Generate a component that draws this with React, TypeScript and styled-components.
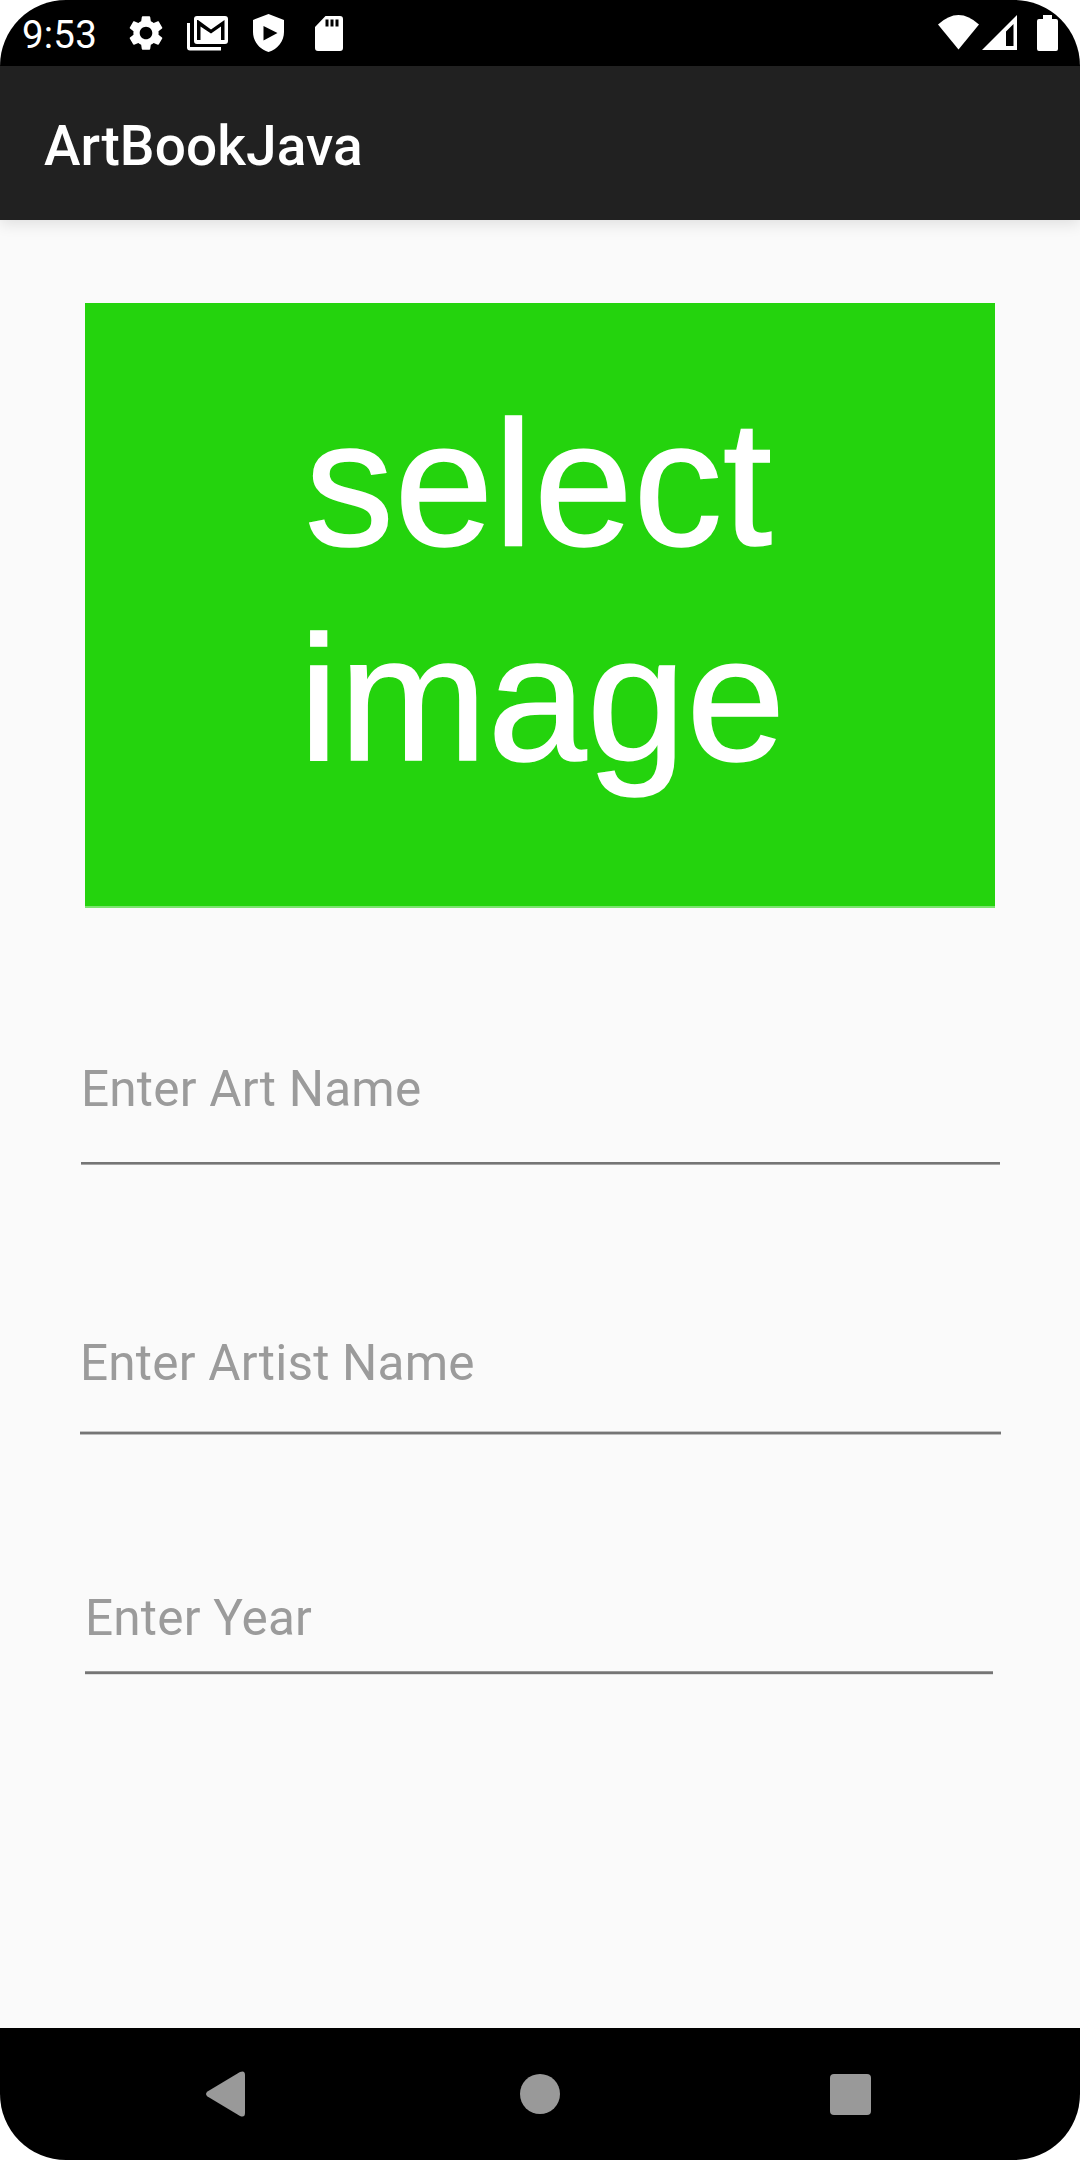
import React from "react";
import styled, { createGlobalStyle } from "styled-components";

const Global = createGlobalStyle`
  * { box-sizing: border-box; }
  body { margin: 0; background: #fff; }
`;

const Screen = styled.div`
  display: flex;
  flex-direction: column;
  width: 1080px;
  height: 2160px;
  overflow: hidden;
  border-radius: 66px;
  background: #fafafa;
  font-family: Roboto, "Liberation Sans", sans-serif;
`;

const StatusBar = styled.header`
  display: flex;
  flex: none;
  justify-content: space-between;
  height: 66px;
  padding: 0 22px;
  background: #000;
  color: #fff;
`;

const StatusGroup = styled.div`
  display: flex;
  align-items: flex-start;
`;

const Clock = styled.time`
  width: 103px;
  padding-top: 12px;
  font-size: 38.5px;
  letter-spacing: 0.2px;
  line-height: 45px;
`;

const Glyph = styled.svg<{ $top?: number; $left?: number }>`
  display: block;
  flex: none;
  margin: ${(p) => p.$top ?? 0}px 0 0 ${(p) => p.$left ?? 0}px;
  fill: currentColor;
`;

const AppBar = styled.div`
  display: flex;
  flex: none;
  align-items: center;
  height: 154px;
  padding: 6px 44px 0;
  background: #212121;
  box-shadow: 0 4px 14px rgba(0, 0, 0, 0.11);
`;

const Title = styled.h1`
  margin: 0;
  color: #fff;
  font-size: 55px;
  font-weight: 500;
  letter-spacing: 0.1px;
  line-height: 64px;
`;

const Form = styled.main`
  display: flex;
  flex: 1;
  flex-direction: column;
  padding-top: 83px;
`;

const ImagePicker = styled.button`
  display: flex;
  flex: none;
  flex-direction: column;
  align-items: flex-start;
  justify-content: flex-start;
  width: 910px;
  height: 605px;
  margin: 0 0 0 85px;
  padding: 74px 0 0 214px;
  border: 0;
  border-bottom: 2px solid #7ce56f;
  background: #24d30d;
  color: #fff;
  font-family: "Liberation Sans", Arial, sans-serif;
  font-size: 177.5px;
  letter-spacing: 0.7px;
  line-height: 214.5px;
  -webkit-text-stroke: 1.6px #fff;
`;

const PickerLine = styled.span<{ $indent: number }>`
  padding-left: ${(p) => p.$indent}px;
`;

interface FieldBox {
  $left: number;
  $width: number;
  $top: number;
  $height: number;
  $inset: number;
  $edge: string;
  $tail: string;
}

const Field = styled.input<FieldBox>`
  flex: none;
  width: ${(p) => p.$width}px;
  height: ${(p) => p.$height}px;
  margin: ${(p) => p.$top}px 0 0 ${(p) => p.$left}px;
  padding: 0 0 ${(p) => p.$inset}px;
  border: 0;
  border-radius: 0;
  outline: 0;
  background: linear-gradient(
    to top,
    ${(p) => p.$tail} 1px,
    #757575 1px,
    #757575 3px,
    ${(p) => p.$edge} 3px,
    ${(p) => p.$edge} 4px,
    transparent 4px
  );
  color: #212121;
  font-family: inherit;
  font-size: 49.5px;
  letter-spacing: 0.2px;
  line-height: 58px;

  &::placeholder {
    color: #9b9b9b;
    opacity: 1;
  }
`;

const NavBar = styled.nav`
  display: grid;
  flex: none;
  grid-template-columns: 315px 310px 68px;
  align-items: center;
  height: 132px;
  padding-left: 191px;
  background: #000;
`;

const NavButton = styled.button`
  display: grid;
  place-items: center;
  width: 68px;
  height: 68px;
  padding: 0;
  border: 0;
  background: none;
  color: #999;
`;

const GearIcon = () => (
  <Glyph width="42" height="42" viewBox="0 0 24 24" $top={12}>
    <path d="M19.14 12.94c.04-.3.06-.61.06-.94 0-.32-.02-.64-.07-.94l2.03-1.58c.18-.14.23-.41.12-.61l-1.92-3.32c-.12-.22-.37-.29-.59-.22l-2.39.96c-.5-.38-1.03-.7-1.62-.94l-.36-2.54c-.04-.24-.24-.41-.48-.41h-3.84c-.24 0-.43.17-.47.41l-.36 2.54c-.59.24-1.13.57-1.62.94l-2.39-.96c-.22-.08-.47 0-.59.22L2.74 8.87c-.12.21-.08.47.12.61l2.03 1.58c-.05.3-.09.63-.09.94s.02.64.07.94l-2.03 1.58c-.18.14-.23.41-.12.61l1.92 3.32c.12.22.37.29.59.22l2.39-.96c.5.38 1.03.7 1.62.94l.36 2.54c.05.24.24.41.48.41h3.84c.24 0 .44-.17.47-.41l.36-2.54c.59-.24 1.13-.56 1.62-.94l2.39.96c.22.08.47 0 .59-.22l1.92-3.32c.12-.22.07-.47-.12-.61l-2.01-1.58zM12 15.6c-1.98 0-3.6-1.62-3.6-3.6s1.62-3.6 3.6-3.6 3.6 1.62 3.6 3.6-1.62 3.6-3.6 3.6z" />
  </Glyph>
);

const MailStackIcon = () => (
  <Glyph width="41" height="35" viewBox="0 0 41 35" $top={16} $left={20}>
    <path d="M0 7h3v24h31v3.500H3q-3 0-3-3z" />
    <path fillRule="evenodd" d="M10 0h28q3 0 3 3v22q0 3-3 3H10q-3 0-3-3V3q0-3 3-3zM10 4v20h3.500V10.500L24 17.500l10-7V24h3.500V4L24 13.500 11 4z" />
  </Glyph>
);

const ShieldPlayIcon = () => (
  <Glyph width="32" height="38" viewBox="0 0 32 38" $top={14} $left={25}>
    <path fillRule="evenodd" d="M15.500 0l15.500 6v12c0 9-6 17-15.500 20C6 35 0 27 0 18V6zM10.500 12v14.500L24.500 19z" />
  </Glyph>
);

const SdCardIcon = () => (
  <Glyph width="28" height="35" viewBox="0 0 28 35" $top={16} $left={30}>
    <path fillRule="evenodd" d="M10.500 0H25q3 0 3 3v29q0 3-3 3H3q-3 0-3-3V11zM10.500 3.500v7h3v-7zM15.500 3.500v7h3v-7zM20.500 3.500v7h3v-7z" />
  </Glyph>
);

const WifiIcon = () => (
  <Glyph width="41" height="35" viewBox="0 0 41 35" $top={15}>
    <path d="M0 9.500Q20.500-9.500 41 9.500L20.500 34.500z" />
  </Glyph>
);

const SignalIcon = () => (
  <Glyph width="35" height="35" viewBox="0 0 35 35" $top={15} $left={3}>
    <path fillRule="evenodd" d="M35 0v35H0zM31.500 9L24 16.500v14.500h7.500z" />
  </Glyph>
);

const BatteryIcon = () => (
  <Glyph width="21" height="36" viewBox="0 0 21 36" $top={15} $left={20}>
    <path d="M6 0h9v4h4q2 0 2 2v28q0 2-2 2H2q-2 0-2-2V6q0-2 2-2h4z" />
  </Glyph>
);

const FIELDS = [
  { label: "Enter Art Name", $left: 81, $width: 919, $top: 140, $height: 117, $inset: 35, $edge: "transparent", $tail: "#a6a6a6" },
  { label: "Enter Artist Name", $left: 80, $width: 921, $top: 152, $height: 118, $inset: 26, $edge: "#c4c4c4", $tail: "#bdbdbd" },
  { label: "Enter Year", $left: 85, $width: 908, $top: 132, $height: 108, $inset: 6, $edge: "#999999", $tail: "#e0e0e0" },
];

export default function App() {
  return (
    <>
      <Global />
      <Screen>
        <StatusBar>
          <StatusGroup>
            <Clock>9:53</Clock>
            <GearIcon />
            <MailStackIcon />
            <ShieldPlayIcon />
            <SdCardIcon />
          </StatusGroup>
          <StatusGroup>
            <WifiIcon />
            <SignalIcon />
            <BatteryIcon />
          </StatusGroup>
        </StatusBar>
        <AppBar>
          <Title>ArtBookJava</Title>
        </AppBar>
        <Form>
          <ImagePicker>
            <PickerLine $indent={6}>select</PickerLine>
            <PickerLine $indent={0}>image</PickerLine>
          </ImagePicker>
          {FIELDS.map(({ label, ...box }) => (
            <Field key={label} placeholder={label} {...box} />
          ))}
        </Form>
        <NavBar>
          <NavButton aria-label="Back">
            <Glyph width="40" height="46" viewBox="0 0 40 46">
              <path d="M2.500 20.500L35 1q5-2 5 3v38q0 5-5 3L2.500 25.500Q-.5 23 2.500 20.500z" />
            </Glyph>
          </NavButton>
          <NavButton aria-label="Home">
            <Glyph width="40" height="40" viewBox="0 0 40 40">
              <circle cx="20" cy="20" r="20" />
            </Glyph>
          </NavButton>
          <NavButton aria-label="Recents">
            <Glyph width="41" height="41" viewBox="0 0 41 41">
              <rect width="41" height="41" rx="4" />
            </Glyph>
          </NavButton>
        </NavBar>
      </Screen>
    </>
  );
}
